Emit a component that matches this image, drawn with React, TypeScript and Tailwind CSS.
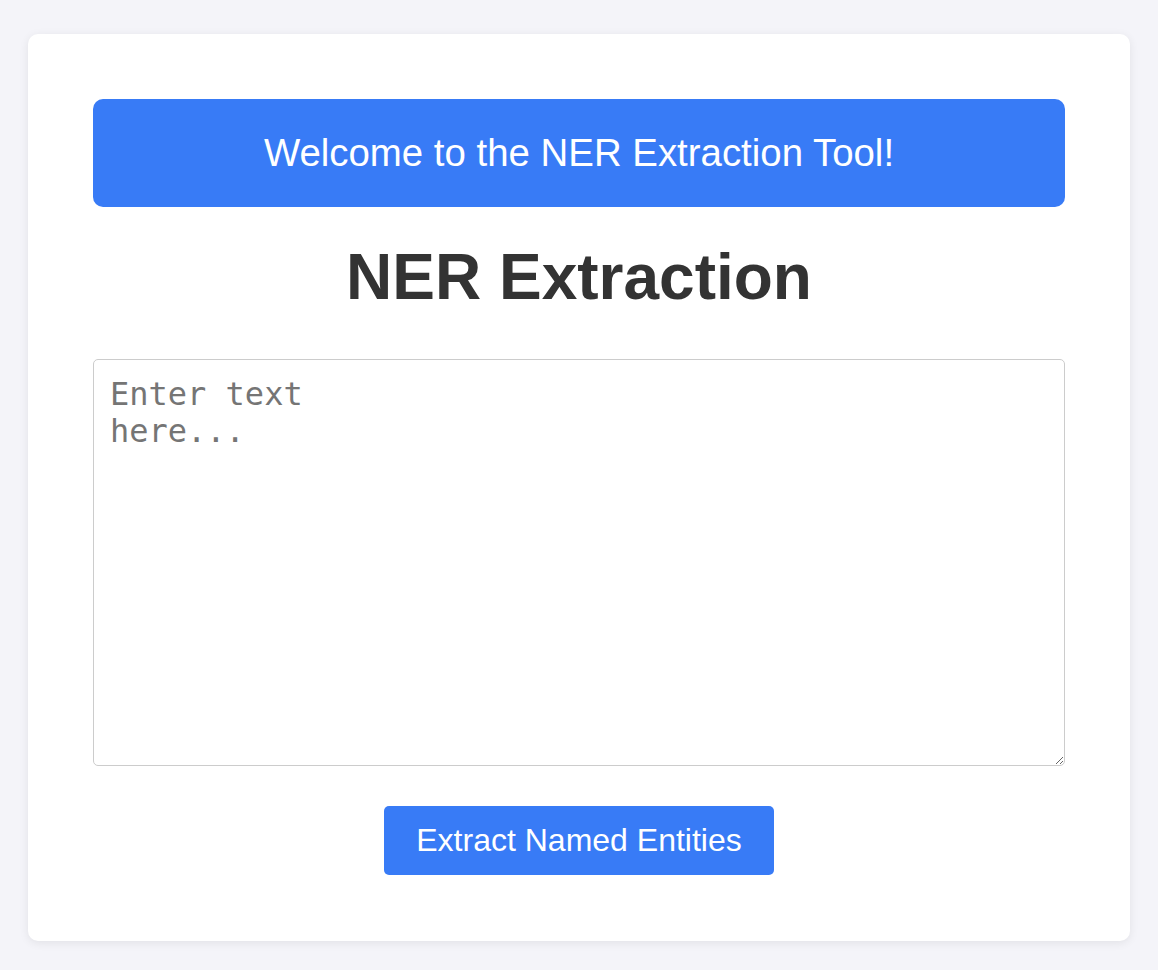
import React from "react";

export default function App() {
  return (
    <div
      className="min-h-screen bg-[#f4f4f9] pt-[34px] px-[28px] pb-[30px]"
      style={{ fontFamily: '"Liberation Sans", Arial, sans-serif' }}
    >
      <div className="bg-white rounded-[10px] shadow-[0_2px_10px_rgba(0,0,0,0.08)] px-[65px] pt-[65px] pb-[66px]">
        <div className="bg-[#387bf6] text-white text-[38.4px] leading-[1.15] rounded-[10px] py-[32px] text-center">
          Welcome to the NER Extraction Tool!
        </div>
        <h1 className="text-[64px] font-bold text-[#333333] leading-none mt-[38px] mb-[50px] text-center">
          NER Extraction
        </h1>
        <textarea
          className="block w-full h-[407px] border border-[#cccccc] rounded-[5px] p-[16px] text-[32px] leading-[1.15] text-[#333] placeholder:text-[#757575] outline-none"
          style={{ fontFamily: '"DejaVu Sans Mono", "Liberation Mono", monospace' }}
          placeholder={"Enter text\nhere..."}
        />
        <button className="block mx-auto mt-[40px] bg-[#387bf6] text-white text-[32px] leading-[1.15] px-[32px] py-[16px] rounded-[5px]">
          Extract Named Entities
        </button>
      </div>
    </div>
  );
}
